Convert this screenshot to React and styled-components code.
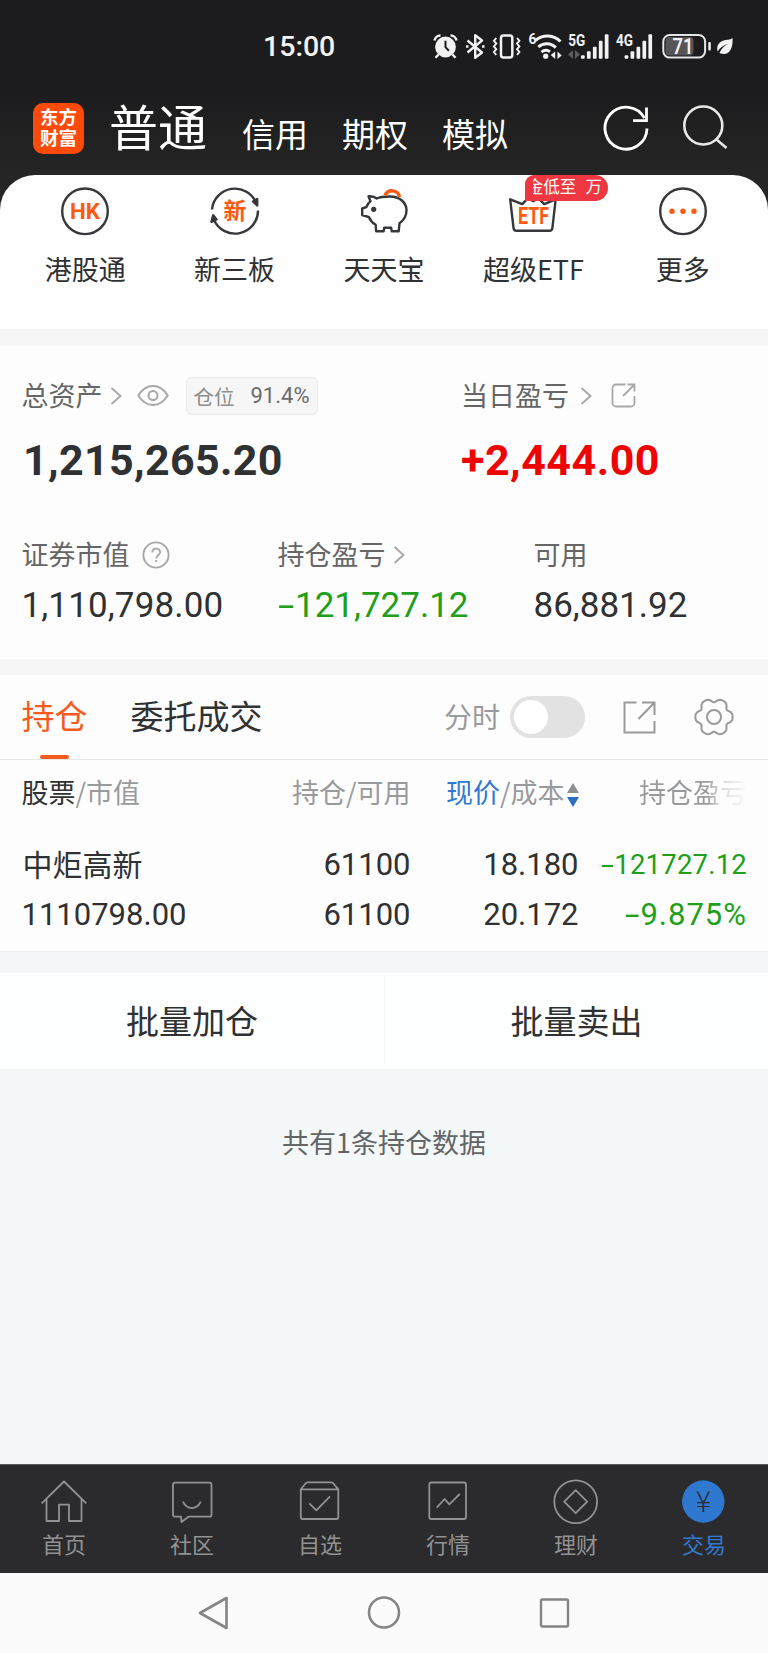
import React, { useState } from 'react';
import styled, { createGlobalStyle, css } from 'styled-components';

const tokens = {
  text: '#303133',
  label: '#666666',
  muted: '#999a9c',
  line: '#a8a8a8',
  orange: '#f55a1e',
  red: '#ee0404',
  green: '#20a01a',
  blue: '#3279d2',
  band: '#f6f6f7',
  cjk: "'Noto Sans CJK SC', sans-serif",
  num: "Roboto, 'Noto Sans CJK SC', sans-serif",
};

const GlobalStyle = createGlobalStyle`
  * { box-sizing: border-box; }
  body { margin: 0; background: #f4f8f9; font-family: ${tokens.cjk}; color: ${tokens.text}; }
  svg { display: block; flex: none; }
`;

// --- SHELL ---
const Screen = styled.div`
  width: 768px; height: 1653px; overflow: hidden;
  display: flex; flex-direction: column;
`;
const Header = styled.header`
  height: 175px; flex: none;
  background: linear-gradient(#1c1c1e 50%, #252525);
`;
const StatusBar = styled.div`
  height: 94px; padding: 0 28px 0 263px;
  display: flex; align-items: center; justify-content: space-between;
`;
const Clock = styled.div`
  font: 500 28.5px/32px ${tokens.num}; color: #f4f4f4;
`;
const TitleRow = styled.div`
  height: 66px; padding: 0 38px 0 33px;
  display: flex; align-items: center;
`;
const Logo = styled.div`
  width: 51px; height: 51px; margin: 2px 25px 0 0; padding: 3px 0 0 7px; flex: none;
  border-radius: 10px; background: #ff4a08; color: #fff;
  font-size: 18.5px; font-weight: 700; line-height: 21.5px;
  word-break: break-all;
`;
const MainTitle = styled.h1`
  margin: -5px 35px 0 0; color: #fff;
  font-size: 49px; font-weight: 400; line-height: 60px;
`;
const SubTitle = styled.span`
  margin: 12px 34px 0 0; color: #fff;
  font-size: 33px; line-height: 40px;
`;
const HeaderIcons = styled.div`
  margin-left: auto; display: flex; gap: 32px; padding-top: 2px;
`;

// --- SHORTCUTS ---
const ShortcutWrap = styled.div`
  flex: none; background: #252525;
`;
const ShortcutPanel = styled.nav`
  height: 154px; padding: 11px 10.5px 0;
  border-radius: 35px 35px 0 0; background: #fefefe;
  display: grid; grid-template-columns: repeat(5, 1fr);
`;
const Shortcut = styled.div`
  position: relative;
  display: flex; flex-direction: column; align-items: center; gap: 15px;
`;
const ShortcutLabel = styled.span`
  font-size: 27px; line-height: 36px;
`;
const Promo = styled.div`
  position: absolute; top: -11px; left: 66px;
  width: 83px; height: 26px; padding: 0 5px 0 8px;
  border-radius: 9px 13px 13px 0; background: #ee3740; color: #fff;
  font-size: 16.5px; line-height: 23px;
`;
const PromoClip = styled.div`
  overflow: hidden; white-space: pre; word-spacing: 1px;
  span { margin-left: -6px; }
`;
const Band = styled.div`
  height: ${p => p.$h}px; flex: none; background: ${tokens.band};
`;

// --- ASSETS ---
const Assets = styled.section`
  height: 313px; flex: none; padding: 28px 0 0 21.5px; background: #fdfdfd;
`;
const Columns = styled.div`
  display: grid; grid-template-columns: ${p => p.$cols};
  margin-top: ${p => p.$top || 0}px;
`;
const LabelRow = styled.div`
  height: 41px; display: flex; align-items: center;
  font-size: 27px; color: ${tokens.label}; line-height: 40px;
  svg { margin-top: 2px; }
`;
const PositionTag = styled.div`
  width: 132px; height: 38px; margin: 2px 0 0 17px;
  display: flex; align-items: center; justify-content: center; gap: 16px;
  border: 1px solid #e9e9e9; border-radius: 6px; background: #f6f6f6;
  font-size: 20.5px; line-height: 32px; color: #8d8d8d;
  b { font: 400 22px/32px ${tokens.num}; color: #6b6b6b; }
`;
const BigValue = styled.div`
  margin-top: 20px; padding-left: ${p => p.$indent || 0}px; color: ${p => p.$color || tokens.text};
  font: 700 43px/50px ${tokens.num}; letter-spacing: ${p => p.$track || 0}px;
`;
const Value = styled.div`
  margin-top: 11px; color: ${p => p.$color || tokens.text};
  font: 400 35px/42px ${tokens.num}; letter-spacing: ${p => p.$track || 0}px;
`;
const Minus = styled.span`
  display: inline-block; width: 0.5em; text-align: left;
  &::before { content: '-'; display: inline-block; transform: scaleX(1.7); transform-origin: 0 50%; }
`;

// --- TABS ---
const TabBar = styled.div`
  height: 85px; flex: none; padding: 0 34px 0 21.5px; background: #fdfdfd;
  border-bottom: 1px solid #e6e6e6;
  display: flex; align-items: center;
`;
const Tab = styled.button`
  position: relative; height: 84px; margin: 0 43px 0 0; padding: 0 0 4px; border: 0; background: none;
  font: 400 33px/40px ${tokens.cjk}; color: ${p => (p.$active ? tokens.orange : tokens.text)};
  ${p => p.$active && css`
    &::after {
      content: ''; position: absolute; left: 18.5px; bottom: 0;
      width: 29px; height: 4px; border-radius: 2px; background: ${tokens.orange};
    }
  `}
`;
const TabTools = styled.div`
  margin-left: auto; display: flex; align-items: center;
  font-size: 28px; line-height: 40px; color: ${tokens.muted};
  > span { padding-bottom: 3px; margin-right: 10px; }
`;
const Toggle = styled.button`
  width: 75px; height: 42px; margin: 0 38px 0 0; padding: 4px; border: 0; border-radius: 21px;
  display: flex; justify-content: ${p => (p.$on ? 'flex-end' : 'flex-start')};
  background: ${p => (p.$on ? tokens.blue : '#e2e2e2')};
  &::before { content: ''; width: 34px; height: 34px; border-radius: 50%; background: #fff; }
`;

// --- TABLE ---
const Table = styled.section`
  height: 192px; flex: none; padding-left: 21.5px; background: #fdfdfd;
  border-bottom: 1px solid #efefef;
`;
const TableRow = styled.div`
  display: grid; grid-template-columns: 200px 189px 168px 168.5px;
  height: 50px; align-items: center;
  font: 400 31px/50px ${tokens.num};
  > * + * { text-align: right; }
`;
const HeadRow = styled(TableRow)`
  height: 64px; margin-bottom: 16px;
  font: 400 27px/40px ${tokens.cjk}; color: ${tokens.muted};
`;
const Dark = styled.span` color: ${tokens.text}; `;
const SortCell = styled.span`
  display: flex; justify-content: flex-end; align-items: center; gap: 2px;
  em { font-style: normal; color: ${tokens.blue}; }
  svg { margin-top: 5px; }
`;
const FadeCell = styled.span`
  background: linear-gradient(90deg, ${tokens.muted} 76%, #d8d8d8 84%, #f8f8f8 99%);
  background-clip: text; -webkit-background-clip: text; color: transparent;
`;
const StockName = styled.span`
  font: 400 30px/46px ${tokens.cjk}; padding: 0 0 4px 1px;
`;
const Loss = styled.span`
  color: ${tokens.green}; font-size: ${p => p.$size || 31}px; letter-spacing: ${p => p.$track || 0}px;
`;

// --- ACTIONS ---
const Actions = styled.div`
  height: 96px; margin-top: 21px; flex: none; background: #fdfefe;
  display: grid; grid-template-columns: 1fr 1fr; align-items: center;
`;
const Action = styled.button`
  height: 88px; padding: 0 0 3px; border: 0; background: none;
  font: 400 33px/40px ${tokens.cjk}; color: ${tokens.text};
  & + & { border-left: 1px solid #f4f4f4; }
`;
const Summary = styled.div`
  flex: 1; padding-top: 53px; text-align: center;
  background: linear-gradient(#f5f5f6, #f4f8f9 26px);
  font-size: 27px; line-height: 40px; color: #636566;
`;

// --- BOTTOM ---
const BottomNav = styled.nav`
  height: 109px; flex: none; background: #2b2b2d; border-top: 1px solid #55585a;
  display: grid; grid-template-columns: repeat(6, 1fr);
`;
const NavItem = styled.div`
  display: flex; flex-direction: column; align-items: center; gap: 2px; padding-top: 12px;
  font-size: 22px; line-height: 32px; color: ${p => (p.$active ? tokens.blue : '#929292')};
`;
const SystemNav = styled.div`
  height: 80px; flex: none; background: #fbfbfb;
  display: flex; justify-content: center; align-items: center; gap: 138px;
`;

// --- ICONS ---
const barHeights = [3.5, 7.5, 12, 18, 24.5];
const bars = x => barHeights.map((h, i) => (
  <rect key={h} x={x + i * 5.95} y={58.8 - h} width="3.7" height={h} rx="1" />
));

const StatusIcons = () => (
  <svg width="310" height="34" viewBox="430 30 310 34" fill="#f2f2f2" fontFamily="Roboto">
    <circle cx="445.5" cy="47" r="10.4" />
    <path d="M434.5 40.5a6 6 0 0 1 6-5M456.500 40.5a6 6 0 0 0-6-5M438.5 54.5l-3 3.3M452.5 54.5l3 3.3" fill="none" stroke="#f2f2f2" strokeWidth="2.4" />
    <path d="M445.5 40.8v6.4l3.4 3.6" fill="none" stroke="#1c1c1e" strokeWidth="2" />
    <path d="M467.5 40.5L482 52.5l-6.8 5.3V35.3l6.8 5.2-14.5 12M466 46.5h2.5M482 46.5h2.5" fill="none" stroke="#f2f2f2" strokeWidth="2.4" strokeLinejoin="round" />
    <rect x="501" y="35.4" width="11.3" height="22" rx="2.5" fill="none" stroke="#f2f2f2" strokeWidth="2.5" />
    <path d="M496.3 38l-2.4 2.8 2.4 2.8-2.4 2.8 2.4 2.8-2.4 2.8 2.4 2.8M517 38l2.4 2.8-2.4 2.8 2.4 2.8-2.4 2.8 2.4 2.8-2.4 2.8" fill="none" stroke="#f2f2f2" strokeWidth="1.9" />
    <text x="528.5" y="44" fontSize="14" fontWeight="700">6</text>
    <path d="M535.5 40.5a18 18 0 0 1 25 1M538.3 47a12.5 12.5 0 0 1 17.5.6M541.5 52.2a7 7 0 0 1 8.5-.5" fill="none" stroke="#f2f2f2" strokeWidth="3" />
    <circle cx="545.7" cy="56.2" r="2.6" />
    <path d="M555.2 51.5v7.5l-4.500-4M557.5 59v-7.5l4.2 4" />
    <text x="568.3" y="46" fontSize="16" fontWeight="700" textLength="17" lengthAdjust="spacingAndGlyphs">5G</text>
    <path d="M573 50v9l-5-4.5M575 59v-9l5 4.5" fill="#5c5c5e" />
    {bars(581)}
    <text x="616" y="46" fontSize="16" fontWeight="700" textLength="17" lengthAdjust="spacingAndGlyphs">4G</text>
    {bars(624.6)}
    <rect x="665.5" y="37" width="28" height="18.5" rx="4" fill="#555557" />
    <rect x="663.3" y="35" width="41.8" height="22.6" rx="6.5" fill="none" stroke="#e6e6e6" strokeWidth="2" />
    <text x="672.5" y="53.7" fontSize="22.5" fontWeight="600" textLength="21" lengthAdjust="spacingAndGlyphs">71</text>
    <rect x="708.3" y="42" width="2.5" height="8.5" rx="1" />
    <path d="M732.5 38c.6 8-1.5 16-9 16-2 0-3.3-.5-4-1.2 2-4.6 5-7 9-9-5 1.2-8.5 4-10.8 7.7-2-6 2.3-11 7.8-11.5 3-.3 5-.5 7-2z" />
  </svg>
);
const RefreshIcon = () => (
  <svg width="48" height="48" viewBox="0 0 48 48" fill="none" stroke="#fff" strokeWidth="2.8">
    <path d="M45 24.5A21 21 0 1 1 42.5 14.2M44.5 3.5v13.2H31" />
  </svg>
);
const SearchIcon = () => (
  <svg width="48" height="48" viewBox="0 0 48 48" fill="none" stroke="#e8e8e8" strokeWidth="2.6">
    <circle cx="21.3" cy="21.5" r="19" />
    <path d="M34.5 35.5L44.5 44" />
  </svg>
);

const ShortcutIcon = ({ children }) => (
  <svg width="50" height="50" viewBox="0 0 50 50" fill="none" stroke="#35373a" strokeWidth="2.4" strokeLinejoin="round">{children}</svg>
);
const glyph = { fill: '#fc5a10', stroke: 'none', textAnchor: 'middle', fontWeight: 700 };
const HkIcon = () => (
  <ShortcutIcon>
    <circle cx="25" cy="25.3" r="22.8" />
    <text x="25" y="33.2" fontSize="22.5" fontFamily="Roboto" textLength="30" lengthAdjust="spacingAndGlyphs" {...glyph}>HK</text>
  </ShortcutIcon>
);
const NewBoardIcon = () => (
  <ShortcutIcon>
    <path d="M2 23.5A23 23 0 0 1 46 16.5M48 24.500A23 23 0 0 1 4 34" />
    <path d="M43 15.500l4.200-2.500v6.500zM6.500 33.500l-5 2.300 1.700-6.500z" fill="#35373a" />
    <text x="25" y="33.2" fontSize="23" fontFamily="Noto Sans CJK SC" {...glyph}>新</text>
  </ShortcutIcon>
);
const PigIcon = () => (
  <ShortcutIcon>
    <path d="M9.5 10.3c3-.3 6 .4 8.3 2.2 3.500-1.7 8-2 13-2 10 0 16.7 6 16.700 13.800 0 5.500-2.800 10-7 13l-.8 8h-7l-.5-3.500h-7l-.6 3.500h-7.500l-.4-6.500c-3-1.700-5.500-4.500-6.700-7.600L3.200 29v-6.500l4-1.300c1-2.500 2.500-4.500 4.300-6z" />
    <circle cx="14.7" cy="23.3" r="2.6" fill="#35373a" stroke="none" />
    <path d="M26 9.500a7.600 7.600 0 0 1 14.500 1.500" stroke="#fc5a10" strokeWidth="3.4" />
  </ShortcutIcon>
);
const EtfIcon = () => (
  <ShortcutIcon>
    <path d="M2.2 13.3l12 4.8 6-6 5 3 5-3 6 6 11.5-4.8-3.3 28.500c-.2 2-1.200 3-3 3H8.5c-1.800 0-2.800-1-3-3z" />
    <text x="25.500" y="37.500" fontSize="23" fontFamily="Roboto" textLength="31" lengthAdjust="spacingAndGlyphs" {...glyph}>ETF</text>
  </ShortcutIcon>
);
const MoreIcon = () => (
  <ShortcutIcon>
    <circle cx="25" cy="25.3" r="22.8" />
    <g fill="#fc5a10" stroke="none">
      <circle cx="14" cy="25.3" r="2.700" /><circle cx="25" cy="25.3" r="2.700" /><circle cx="36" cy="25.3" r="2.700" />
    </g>
  </ShortcutIcon>
);

const Chevron = styled(props => (
  <svg width="12" height="18" viewBox="0 0 12 18" fill="none" stroke="#a8a8a8" strokeWidth="1.9" {...props}>
    <path d="M1.5 1l9 8-9 8" />
  </svg>
))` margin-left: 7px; `;
const EyeIcon = styled(props => (
  <svg width="32" height="24" viewBox="0 0 32 24" fill="none" stroke={tokens.line} strokeWidth="2" {...props}>
    <path d="M1.3 11.5C5 5.5 10 2 16 2s11 3.5 14.7 9.5C27 17.5 22 21 16 21S5 17.5 1.3 11.5z" />
    <circle cx="16" cy="11.5" r="4.5" />
  </svg>
))` margin-left: 15px; `;
const HelpIcon = styled(props => (
  <svg width="28" height="28" viewBox="0 0 28 28" fill="none" stroke={tokens.line} strokeWidth="1.9" {...props}>
    <circle cx="14" cy="14" r="12.6" />
    <path d="M10.3 11.5c0-5.2 7.8-5 7.8-.3 0 2.8-3.9 3-3.9 6.3M14.2 19v2" />
  </svg>
))` margin-left: 12px; `;
const ShareIcon = styled(props => (
  <svg width="25" height="25" viewBox="0 0 25 25" fill="none" stroke={tokens.line} strokeWidth="1.8" {...props}>
    <path d="M14.5 1.5H5A3.5 3.5 0 0 0 1.5 5v15A3.5 3.5 0 0 0 5 23.5h15a3.5 3.5 0 0 0 3.5-3.5v-7M12 13L23 2M16.5 1.5h7v7" />
  </svg>
))` margin-left: 19px; `;
const ExportIcon = () => (
  <svg width="33" height="33" viewBox="0 0 33 33" fill="none" stroke={tokens.muted} strokeWidth="2">
    <path d="M13.5 1.5h-12v30h30V20M15.5 18L31 2M19 1.5h12.5V14" />
  </svg>
);

// six soft teeth around the hub
const gearPath = Array.from({ length: 73 }, (_, i) => {
  const a = (i / 72) * Math.PI * 2;
  const r = 17.1 + 2 * Math.cos(6 * a) - 0.5 * Math.cos(12 * a);
  return `${i ? 'L' : 'M'}${(20 + r * Math.cos(a)).toFixed(2)} ${(20 + r * Math.sin(a)).toFixed(2)}`;
}).join('');
const GearIcon = styled(props => (
  <svg width="40" height="40" viewBox="0 0 40 40" fill="none" stroke={tokens.muted} strokeWidth="2" {...props}>
    <path d={gearPath} strokeLinejoin="round" />
    <circle cx="20" cy="20" r="7" />
  </svg>
))` margin-left: 38px; `;
const SortIcon = () => (
  <svg width="12" height="24" viewBox="0 0 12 24">
    <path d="M6 0l6 10H0z" fill="#8e8f91" />
    <path d="M6 24l6-10H0z" fill="#2c6ec4" />
  </svg>
);

const NavIcon = ({ children }) => (
  <svg width="48" height="48" viewBox="0 0 48 48" fill="none" stroke="#929292" strokeWidth="1.8" strokeLinejoin="round">{children}</svg>
);

const navItems = [
  { label: '首页', icon: <path d="M1.7 26.3L24 4.5l22.3 21.8M6.5 22v22H19V27.7h10V44h12.5V22" /> },
  { label: '社区', icon: <path d="M7 5.7h34.5q2 0 2 2v30q0 2-2 2H20.5L13.5 45l-.5-5.3H7q-2 0-2-2v-30q0-2 2-2zM15 24.7c4 8.5 14 8.5 17.7 0" /> },
  { label: '自选', icon: <path d="M4.8 12.3L10 6q.6-.7 1.5-.7h24q.9 0 1.5.7l5.3 6.3zV40q0 2 2 2h33.5q2 0 2-2V12.3M13.3 26.3l7 7L34 19.3" /> },
  { label: '行情', icon: <path d="M7.3 5.5H40q2 0 2 2V40q0 2-2 2H7.3q-2 0-2-2V7.5q0-2 2-2zM12.7 30.7l8-8.7 4.6 5.3L35.7 17" /> },
  { label: '理财', icon: <><circle cx="23.7" cy="24.7" r="21.4" /><path d="M23.7 13.2l11.5 11.5-11.5 11.5-11.5-11.5z" /></> },
  {
    label: '交易',
    active: true,
    icon: (
      <>
        <circle cx="23.3" cy="24.5" r="21.2" fill="#2f78d0" stroke="none" />
        <text x="23.3" y="35" fontSize="28.5" fontWeight="300" fontFamily="Noto Sans CJK SC" textAnchor="middle" fill="#2b2b2d" stroke="none">¥</text>
      </>
    ),
  },
];

const shortcuts = [
  { label: '港股通', Icon: HkIcon },
  { label: '新三板', Icon: NewBoardIcon },
  { label: '天天宝', Icon: PigIcon },
  { label: '超级ETF', Icon: EtfIcon, promo: '金低至  万' },
  { label: '更多', Icon: MoreIcon },
];

const App = () => {
  const [tab, setTab] = useState('持仓');
  const [intraday, setIntraday] = useState(false);

  return (
    <Screen>
      <GlobalStyle />
      <Header>
        <StatusBar>
          <Clock>15:00</Clock>
          <StatusIcons />
        </StatusBar>
        <TitleRow>
          <Logo>东方财富</Logo>
          <MainTitle>普通</MainTitle>
          {['信用', '期权', '模拟'].map(t => <SubTitle key={t}>{t}</SubTitle>)}
          <HeaderIcons><RefreshIcon /><SearchIcon /></HeaderIcons>
        </TitleRow>
      </Header>

      <ShortcutWrap>
        <ShortcutPanel>
          {shortcuts.map(({ label, Icon, promo }) => (
            <Shortcut key={label}>
              <Icon />
              <ShortcutLabel>{label}</ShortcutLabel>
              {promo && <Promo><PromoClip><span>{promo}</span></PromoClip></Promo>}
            </Shortcut>
          ))}
        </ShortcutPanel>
      </ShortcutWrap>
      <Band $h={17} />

      <Assets>
        <Columns $cols="439.5px 1fr">
          <div>
            <LabelRow>
              总资产<Chevron /><EyeIcon />
              <PositionTag>仓位<b>91.4%</b></PositionTag>
            </LabelRow>
            <BigValue $indent={1.5} $track={0.35}>1,215,265.20</BigValue>
          </div>
          <div>
            <LabelRow>当日盈亏<Chevron style={{ marginLeft: 11 }} /><ShareIcon /></LabelRow>
            <BigValue $color={tokens.red} $track={0.5}>+2,444.00</BigValue>
          </div>
        </Columns>
        <Columns $cols="256px 256px 1fr" $top={48}>
          <div>
            <LabelRow>证券市值<HelpIcon /></LabelRow>
            <Value $track={0.15}>1,110,798.00</Value>
          </div>
          <div>
            <LabelRow>持仓盈亏<Chevron /></LabelRow>
            <Value $color={tokens.green}><Minus />121,727.12</Value>
          </div>
          <div>
            <LabelRow>可用</LabelRow>
            <Value>86,881.92</Value>
          </div>
        </Columns>
      </Assets>
      <Band $h={16} />

      <TabBar>
        {['持仓', '委托成交'].map(t => (
          <Tab key={t} $active={tab === t} onClick={() => setTab(t)}>{t}</Tab>
        ))}
        <TabTools>
          <span>分时</span>
          <Toggle $on={intraday} onClick={() => setIntraday(!intraday)} />
          <ExportIcon />
          <GearIcon />
        </TabTools>
      </TabBar>

      <Table>
        <HeadRow>
          <span><Dark>股票</Dark>/市值</span>
          <span>持仓/可用</span>
          <SortCell><span><em>现价</em>/成本</span><SortIcon /></SortCell>
          <FadeCell>持仓盈亏</FadeCell>
        </HeadRow>
        <TableRow>
          <StockName>中炬高新</StockName>
          <span>61100</span>
          <span>18.180</span>
          <Loss $size={27.5} $track={0.2}><Minus />121727.12</Loss>
        </TableRow>
        <TableRow>
          <span>1110798.00</span>
          <span>61100</span>
          <span>20.172</span>
          <Loss $track={1}><Minus />9.875%</Loss>
        </TableRow>
      </Table>

      <Actions>
        <Action>批量加仓</Action>
        <Action>批量卖出</Action>
      </Actions>
      <Summary>共有1条持仓数据</Summary>

      <BottomNav>
        {navItems.map(({ label, icon, active }) => (
          <NavItem key={label} $active={active}>
            <NavIcon>{icon}</NavIcon>
            {label}
          </NavItem>
        ))}
      </BottomNav>
      <SystemNav>
        <svg width="32" height="36" viewBox="0 0 32 36" fill="none" stroke="#858585" strokeWidth="2.6" strokeLinejoin="round">
          <path d="M3 18L29.5 3v30z" />
        </svg>
        <svg width="34" height="34" viewBox="0 0 34 34" fill="none" stroke="#858585" strokeWidth="2.6">
          <circle cx="17" cy="16.5" r="15" />
        </svg>
        <svg width="32" height="32" viewBox="0 0 32 32" fill="none" stroke="#858585" strokeWidth="2.4">
          <rect x="2" y="2.5" width="27" height="27" rx="1.5" />
        </svg>
      </SystemNav>
    </Screen>
  );
};

export default App;
